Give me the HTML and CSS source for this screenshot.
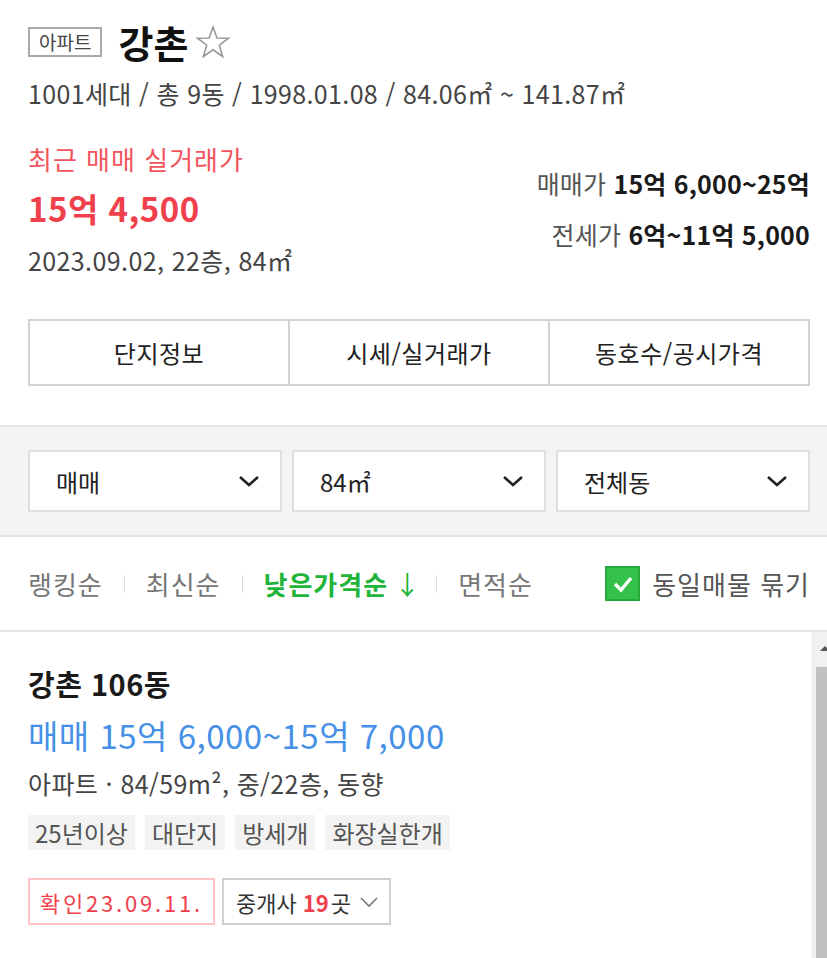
FILE: index.html
```html
<!DOCTYPE html>
<html lang="ko">
<head>
<meta charset="UTF-8">
<meta name="viewport" content="width=device-width, initial-scale=1.0">
<title>강촌 - 단지 정보</title>
<link rel="stylesheet" href="styles.css">
</head>
<body>

  <div class="summary">
    <div class="title-row">
      <span class="type-badge">아파트</span>
      <h1 class="complex-name">강촌</h1>
      <svg class="star" width="36" height="36" viewBox="0 0 36 36">
        <path d="M18 3 L22 14 L33.5 14.2 L24.3 21.2 L27.6 32.5 L18 25.8 L8.4 32.5 L11.7 21.2 L2.5 14.2 L14 14 Z" fill="none" stroke="#9a9a9a" stroke-width="1.6" stroke-linejoin="miter"/>
      </svg>
    </div>
    <p class="complex-info">1001세대 / 총 9동 / 1998.01.08 / 84.06㎡ ~ 141.87㎡</p>

    <div class="price-row">
      <div class="recent-deal">
        <p class="deal-label">최근 매매 실거래가</p>
        <p class="deal-price">15억 4,500</p>
        <p class="deal-meta">2023.09.02, 22층, 84㎡</p>
      </div>
      <div class="price-range">
        <p class="range-line range-first">매매가 <strong>15억 6,000~25억</strong></p>
        <p class="range-line">전세가 <strong>6억~11억 5,000</strong></p>
      </div>
    </div>

    <!-- 상세 탭 -->
    <div class="detail-tabs">
      <a class="tab">단지정보</a>
      <a class="tab">시세/실거래가</a>
      <a class="tab">동호수/공시가격</a>
    </div>
  </div>

  <!-- 필터 -->
  <div class="filter-bar">
    <div class="select-box">
      <span>매매</span>
      <svg class="chevron" width="22" height="14" viewBox="0 0 22 14"><path d="M2 3 L11 11 L20 3" fill="none" stroke="#222" stroke-width="2.6"/></svg>
    </div>
    <div class="select-box">
      <span>84㎡</span>
      <svg class="chevron" width="22" height="14" viewBox="0 0 22 14"><path d="M2 3 L11 11 L20 3" fill="none" stroke="#222" stroke-width="2.6"/></svg>
    </div>
    <div class="select-box">
      <span>전체동</span>
      <svg class="chevron" width="22" height="14" viewBox="0 0 22 14"><path d="M2 3 L11 11 L20 3" fill="none" stroke="#222" stroke-width="2.6"/></svg>
    </div>
  </div>

  <!-- 정렬 -->
  <div class="sort-bar">
    <div class="sort-list">
      <a class="sort-item">랭킹순</a>
      <span class="sort-sep"></span>
      <a class="sort-item">최신순</a>
      <span class="sort-sep"></span>
      <a class="sort-item sort-active">낮은가격순<span class="sort-arrow">↓</span></a>
      <span class="sort-sep"></span>
      <a class="sort-item">면적순</a>
    </div>
    <label class="group-check">
      <span class="check-box">
        <svg width="24" height="20" viewBox="0 0 24 20"><path d="M4 10 L10 16 L20 4" fill="none" stroke="#fff" stroke-width="3.4"/></svg>
      </span>
      동일매물 묶기
    </label>
  </div>

  <div class="list-wrap">
    <div class="article-list">
      <div class="article">
        <p class="article-title">강촌 106동</p>
        <p class="article-price">매매 15억 6,000~15억 7,000</p>
        <p class="article-spec">아파트 · 84/59m², 중/22층, 동향</p>
        <div class="tag-list">
          <span class="tag">25년이상</span>
          <span class="tag">대단지</span>
          <span class="tag">방세개</span>
          <span class="tag">화장실한개</span>
        </div>
        <div class="article-actions">
          <span class="confirm-date">확인23.09.11.</span>
          <span class="agent-btn">중개사 <b>19</b>곳
            <svg width="20" height="12" viewBox="0 0 20 12"><path d="M2 2 L10 10 L18 2" fill="none" stroke="#777" stroke-width="1.6"/></svg>
          </span>
        </div>
      </div>
    </div>
    <div class="scrollbar">
      <div class="sb-button"><span class="sb-arrow"></span></div>
      <div class="sb-thumb"></div>
    </div>
  </div>

</body>
</html>
```

FILE: styles.css
```css
body {
  margin: 0;
  font-family: "Noto Sans CJK KR", "Noto Sans", sans-serif;
  color: #333;
  background: #fff;
  width: 827px;
}

p {
  margin: 0;
}

.summary {
  padding: 22px 17px 39px 28px;
}

.title-row {
  display: flex;
  align-items: center;
  height: 40px;
}

.type-badge {
  display: inline-block;
  box-sizing: border-box;
  height: 30px;
  line-height: 26px;
  padding: 0 9px;
  border: 2px solid #a9a9a9;
  font-size: 19px;
  color: #444;
  margin-right: 16px;
}

.complex-name {
  margin: 0;
  font-size: 38px;
  line-height: 40px;
  font-weight: bold;
  color: #111;
}

.star {
  margin-left: 7px;
}

.complex-info {
  margin-top: 16px;
  line-height: 30px;
  font-size: 25px;
  color: #444;
  letter-spacing: 0.35px;
}

.price-row {
  display: flex;
  justify-content: space-between;
  margin-top: 36px;
}

.deal-label {
  font-size: 26px;
  line-height: 30px;
  color: #f2545e;
  letter-spacing: 1px;
}

.deal-price {
  margin-top: 14px;
  font-size: 33px;
  line-height: 40px;
  font-weight: bold;
  color: #f0404c;
  letter-spacing: 0.5px;
}

.deal-meta {
  margin-top: 17px;
  font-size: 25px;
  line-height: 30px;
  color: #444;
  letter-spacing: 0.4px;
}

.price-range {
  text-align: right;
  padding-top: 24px;
}

.range-line {
  font-size: 25px;
  line-height: 30px;
  color: #555;
  letter-spacing: 0.2px;
}

.range-line strong {
  color: #1a1a1a;
}

.range-first {
  margin-bottom: 21px;
}

.detail-tabs {
  display: flex;
  margin-top: 44px;
  border: 2px solid #d3d3d3;
}

.tab {
  flex: 1;
  height: 63px;
  line-height: 63px;
  text-align: center;
  font-size: 24px;
  letter-spacing: 0.5px;
  color: #222;
}

.tab + .tab {
  border-left: 2px solid #d3d3d3;
}

.filter-bar {
  display: flex;
  gap: 10px;
  padding: 23px 17px 23px 28px;
  background: #f4f4f4;
  border-top: 2px solid #e3e3e3;
  border-bottom: 2px solid #e3e3e3;
}

.select-box {
  flex: 1;
  display: flex;
  align-items: center;
  justify-content: space-between;
  box-sizing: border-box;
  height: 62px;
  padding: 0 20px 0 26px;
  background: #fff;
  border: 2px solid #dfdfdf;
  font-size: 24px;
  color: #222;
}

.sort-bar {
  display: flex;
  align-items: center;
  justify-content: space-between;
  height: 93px;
  padding: 0 17px 0 28px;
  border-bottom: 2px solid #e3e3e3;
}

.sort-list {
  display: flex;
  align-items: center;
}

.sort-item {
  font-size: 26px;
  letter-spacing: 1px;
  color: #777;
  white-space: nowrap;
  flex-shrink: 0;
}

.sort-active {
  color: #1fb43a;
  font-weight: bold;
}

.sort-arrow {
  font-weight: normal;
  margin-left: 6px;
  margin-right: -6px;
}

.sort-sep {
  width: 1px;
  height: 18px;
  margin: 0 21px;
  background: #dcdcdc;
}

.group-check {
  display: flex;
  align-items: center;
  font-size: 26px;
  letter-spacing: 1px;
  color: #555;
}

.check-box {
  display: flex;
  align-items: center;
  justify-content: center;
  box-sizing: border-box;
  width: 35px;
  height: 35px;
  margin-right: 12px;
  background: #33c14a;
  border: 2px solid #27a83c;
}

.list-wrap {
  display: flex;
  height: 326px;
  overflow: hidden;
}

.article-list {
  flex: 1;
}

.article {
  padding: 34px 0 0 28px;
}

.article-title {
  font-size: 29px;
  line-height: 34px;
  font-weight: bold;
  letter-spacing: 0.5px;
  color: #1a1a1a;
}

.article-price {
  margin-top: 15px;
  font-size: 33px;
  line-height: 40px;
  letter-spacing: 0.5px;
  color: #4690e6;
}

.article-spec {
  margin-top: 13px;
  font-size: 25px;
  line-height: 30px;
  color: #444;
  letter-spacing: 0.4px;
}

.tag-list {
  display: flex;
  gap: 10px;
  margin-top: 17px;
}

.tag {
  height: 35px;
  line-height: 35px;
  padding: 0 7px;
  background: #f3f3f3;
  font-size: 24px;
  color: #555;
}

.article-actions {
  display: flex;
  gap: 7px;
  margin-top: 28px;
}

.confirm-date,
.agent-btn {
  display: flex;
  align-items: center;
  box-sizing: border-box;
  height: 47px;
  font-size: 22px;
}

.confirm-date {
  padding: 0 10px;
  letter-spacing: 2.8px;
  border: 2px solid #ffc3c8;
  color: #f0404c;
}

.agent-btn {
  padding: 0 10px 0 12px;
  border: 2px solid #cfcfcf;
  color: #333;
}

.agent-btn b {
  color: #f0404c;
  margin: 0 2px 0 6px;
}

.agent-btn svg {
  margin-left: 8px;
}

.scrollbar {
  display: flex;
  flex-direction: column;
  width: 14px;
  background: #f1f1f1;
  border-left: 1px solid #e8e8e8;
}

.sb-button {
  height: 35px;
  position: relative;
}

/* arrow cut off at the window edge */
.sb-arrow {
  position: absolute;
  right: -3px;
  top: 14px;
  border-left: 5px solid transparent;
  border-right: 5px solid transparent;
  border-bottom: 5px solid #555;
}

.sb-thumb {
  flex: 1;
  margin-left: 3px;
  background: #c1c1c1;
}
```
